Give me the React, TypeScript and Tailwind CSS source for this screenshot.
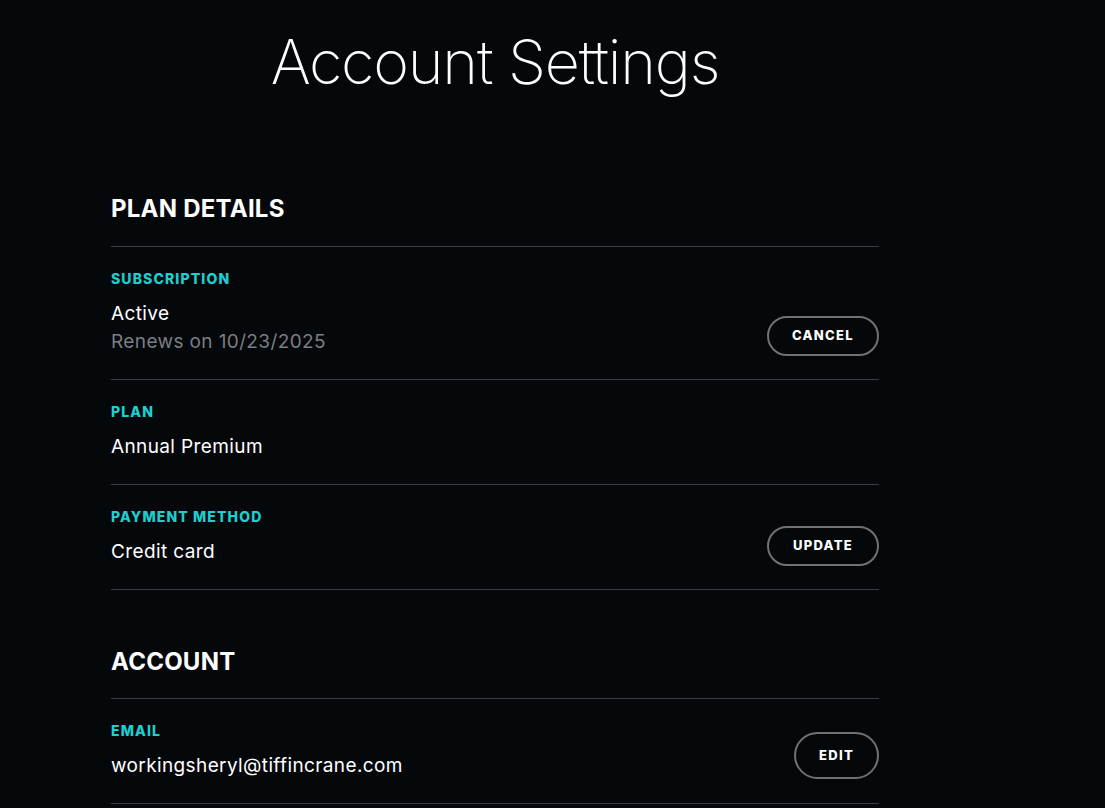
import React from "react";

const font = { fontFamily: "Inter, 'Noto Sans', sans-serif" };

function Btn({ label, tall }: { label: string; tall?: boolean }) {
  return (
    <button
      className={
        "rounded-full border-2 border-[#6f7275] bg-transparent text-white text-[13px] font-extrabold tracking-[0.1em] " +
        (tall ? "h-[47px] w-[85px] mb-[1px]" : "h-[40px] w-[112px]")
      }
    >
      {label}
    </button>
  );
}

function Row({
  label,
  lines,
  button,
  tall,
}: {
  label: string;
  lines: { text: string; muted?: boolean }[];
  button?: string;
  tall?: boolean;
}) {
  return (
    <div className="flex items-end justify-between border-b border-[#3a3d41] pt-6 pb-[23px]">
      <div>
        <div className="text-[14px] leading-4 font-extrabold tracking-[0.08em] text-[#1ccfd1]">{label}</div>
        <div className="mt-[13px]">
          {lines.map((l, i) => (
            <div
              key={i}
              className={"text-[19px] leading-7 tracking-[0.02em] " + (l.muted ? "text-[#7b7e82]" : "text-white")}
            >
              {l.text}
            </div>
          ))}
        </div>
      </div>
      {button && <Btn label={button} tall={tall} />}
    </div>
  );
}

export default function App() {
  return (
    <div className="min-h-[808px] w-full bg-[#05080b] text-white" style={font}>
      <div className="w-[768px] ml-[111px]">
        <h1 className="text-center text-[61px] leading-[124px] font-extralight tracking-[-0.02em] text-white">
          Account Settings
        </h1>
        <h2 className="mt-[69px] text-[24px] leading-8 font-bold tracking-[0.01em] text-white pb-[21px] border-b border-[#3a3d41]">
          PLAN DETAILS
        </h2>
        <Row label="SUBSCRIPTION" lines={[{ text: "Active" }, { text: "Renews on 10/23/2025", muted: true }]} button="CANCEL" />
        <Row label="PLAN" lines={[{ text: "Annual Premium" }]} />
        <Row label="PAYMENT METHOD" lines={[{ text: "Credit card" }]} button="UPDATE" />
        <h2 className="pt-[56px] text-[24px] leading-8 font-bold tracking-[0.01em] text-white pb-[20px] border-b border-[#3a3d41]">
          ACCOUNT
        </h2>
        <Row label="EMAIL" lines={[{ text: "workingsheryl@tiffincrane.com" }]} button="EDIT" tall />
      </div>
    </div>
  );
}
